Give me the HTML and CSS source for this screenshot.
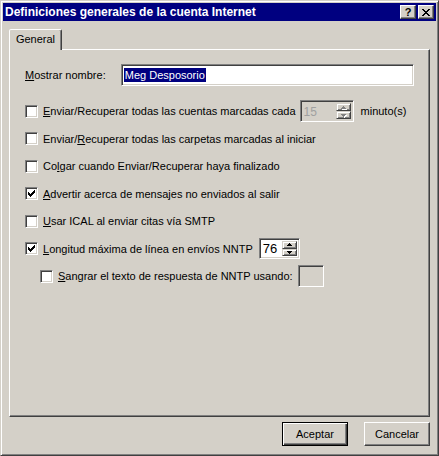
FILE: index.html
```html
<!DOCTYPE html>
<html lang="es">
<head>
    <meta charset="UTF-8">
    <title>Definiciones generales de la cuenta Internet</title>

    <link rel="stylesheet" href="styles.css">
</head>
<body>
    <div class="window">
        <div class="titlebar">
            <span class="caption">Definiciones generales de la cuenta Internet</span>
            <div class="caption-buttons">
                <div class="cap-btn help">?</div>
                <div class="cap-btn">
                    <svg width="8" height="7" viewBox="0 0 8 7" shape-rendering="crispEdges">
                        <path d="M0 0h2v1h-2z M6 0h2v1h-2z M1 1h2v1h-2z M5 1h2v1h-2z M2 2h4v1h-4z M3 3h2v1h-2z M2 4h4v1h-4z M1 5h2v1h-2z M5 5h2v1h-2z M0 6h2v1h-2z M6 6h2v1h-2z" fill="#000"/>
                    </svg>
                </div>
            </div>
        </div>

        <div class="dialog">
            <div class="tabs">
                <div class="tab active">General</div>
            </div>

            <div class="panel">
                <div class="field-row">
                    <div class="field-label"><u>M</u>ostrar nombre:</div>
                    <div class="edit name-edit"><span class="selected">Meg Desposorio</span></div>
                </div>

                <div class="check-list">
                    <div class="check-row">
                        <span class="checkbox"></span>
                        <span class="check-label"><u>E</u>nviar/Recuperar todas las cuentas marcadas cada</span>
                        <div class="spin disabled minutes">
                            <div class="spin-value">15</div>
                            <div class="spin-buttons">
                                <div class="spin-btn"><svg width="5" height="3" viewBox="0 0 5 3" shape-rendering="crispEdges"><path d="M2 0h1v1h-1z M1 1h3v1h-3z M0 2h5v1h-5z"/></svg></div>
                                <div class="spin-btn"><svg width="5" height="3" viewBox="0 0 5 3" shape-rendering="crispEdges"><path d="M0 0h5v1h-5z M1 1h3v1h-3z M2 2h1v1h-1z"/></svg></div>
                            </div>
                        </div>
                        <span class="unit">minuto(s)</span>
                    </div>
                    <div class="check-row">
                        <span class="checkbox"></span>
                        <span class="check-label">Enviar/<u>R</u>ecuperar todas las carpetas marcadas al iniciar</span>
                    </div>
                    <div class="check-row">
                        <span class="checkbox"></span>
                        <span class="check-label">Co<u>l</u>gar cuando Enviar/Recuperar haya finalizado</span>
                    </div>
                    <div class="check-row">
                        <span class="checkbox checked">
                            <svg width="7" height="7" viewBox="0 0 7 7" shape-rendering="crispEdges"><path d="M0 2h1v3h-1z M1 3h1v3h-1z M2 4h1v3h-1z M3 3h1v3h-1z M4 2h1v3h-1z M5 1h1v3h-1z M6 0h1v3h-1z"/></svg>
                        </span>
                        <span class="check-label"><u>A</u>dvertir acerca de mensajes no enviados al salir</span>
                    </div>
                    <div class="check-row">
                        <span class="checkbox"></span>
                        <span class="check-label"><u>U</u>sar ICAL al enviar citas vía SMTP</span>
                    </div>
                    <div class="check-row">
                        <span class="checkbox checked">
                            <svg width="7" height="7" viewBox="0 0 7 7" shape-rendering="crispEdges"><path d="M0 2h1v3h-1z M1 3h1v3h-1z M2 4h1v3h-1z M3 3h1v3h-1z M4 2h1v3h-1z M5 1h1v3h-1z M6 0h1v3h-1z"/></svg>
                        </span>
                        <span class="check-label"><u>L</u>ongitud máxima de línea en envíos NNTP</span>
                        <div class="spin line-length">
                            <div class="spin-value">76</div>
                            <div class="spin-buttons">
                                <div class="spin-btn"><svg width="5" height="3" viewBox="0 0 5 3" shape-rendering="crispEdges"><path d="M2 0h1v1h-1z M1 1h3v1h-3z M0 2h5v1h-5z"/></svg></div>
                                <div class="spin-btn"><svg width="5" height="3" viewBox="0 0 5 3" shape-rendering="crispEdges"><path d="M0 0h5v1h-5z M1 1h3v1h-3z M2 2h1v1h-1z"/></svg></div>
                            </div>
                        </div>
                    </div>
                    <div class="check-row indent">
                        <span class="checkbox"></span>
                        <span class="check-label"><u>S</u>angrar el texto de respuesta de NNTP usando:</span>
                        <div class="edit prefix-edit"></div>
                    </div>
                </div>
            </div>

            <div class="actions">
                <div class="btn default">Aceptar</div>
                <div class="btn">Cancelar</div>
            </div>
        </div>
    </div>
</body>
</html>
```

FILE: styles.css
```css
body {
    margin: 0;
    background: #d4d0c8;
    font-family: "Liberation Sans", Arial, sans-serif;
    font-size: 11px;
    color: #000000;
}

u {
    text-decoration-thickness: 1px;
    text-underline-offset: 1px;
}

.window {
    display: flex;
    flex-direction: column;
    width: 439px;
    height: 456px;
    padding: 2px;
    box-sizing: border-box;
    border: 1px solid;
    border-color: #d4d0c8 #404040 #404040 #d4d0c8;
    box-shadow: inset 1px 1px #ffffff, inset -1px -1px #808080;
    background: #d4d0c8;
}

.titlebar {
    display: flex;
    justify-content: space-between;
    align-items: center;
    height: 18px;
    padding: 0 2px;
    color: #ffffff;
    background: #000080;
}

.caption {
    font-weight: bold;
    font-size: 12px;
}

.caption-buttons {
    display: flex;
    gap: 2px;
}

.cap-btn {
    display: flex;
    justify-content: center;
    align-items: center;
    width: 16px;
    height: 14px;
    box-sizing: border-box;
    border: 1px solid;
    border-color: #ffffff #404040 #404040 #ffffff;
    box-shadow: inset -1px -1px #808080;
    background: #d4d0c8;
    color: #000000;
}

.cap-btn.help {
    font-weight: bold;
    font-size: 11px;
    line-height: 12px;
}

.dialog {
    flex: 1;
    display: flex;
    flex-direction: column;
    padding: 8px 6px 0;
}

.tabs {
    display: flex;
    height: 20px;
}

.tab {
    position: relative;
    z-index: 1;
    width: 53px;
    height: 21px;
    box-sizing: border-box;
    padding-top: 3px;
    border: 1px solid;
    border-bottom: none;
    border-color: #ffffff #404040 transparent #ffffff;
    border-radius: 2px 2px 0 0;
    box-shadow: inset -1px 0 #808080;
    background: #d4d0c8;
    text-align: center;
}

.panel {
    height: 368px;
    padding: 14px 15px 0;
    box-sizing: border-box;
    border: 1px solid;
    border-color: #ffffff #404040 #404040 #ffffff;
    box-shadow: inset -1px -1px #808080;
}

.field-row {
    display: flex;
    align-items: center;
    height: 22px;
}

.field-label {
    width: 96px;
}

.edit {
    box-sizing: border-box;
    border: 1px solid;
    border-color: #808080 #ffffff #ffffff #808080;
    box-shadow: inset 1px 1px #404040, inset -1px -1px #d4d0c8;
}

.name-edit {
    display: flex;
    align-items: center;
    width: 294px;
    height: 22px;
    padding-left: 2px;
    background: #ffffff;
}

.selected {
    padding: 0 1px;
    line-height: 14px;
    color: #ffffff;
    background: #000080;
}

.check-list {
    display: grid;
    grid-auto-rows: 22px;
    row-gap: 5.5px;
    margin-top: 14px;
}

.check-row {
    display: flex;
    align-items: center;
}

.check-row.indent {
    padding-left: 15px;
}

.checkbox {
    display: flex;
    justify-content: center;
    align-items: center;
    width: 13px;
    height: 13px;
    margin-right: 5px;
    box-sizing: border-box;
    border: 1px solid;
    border-color: #808080 #ffffff #ffffff #808080;
    box-shadow: inset 1px 1px #404040, inset -1px -1px #d4d0c8;
    background: #ffffff;
}

.spin {
    display: flex;
    box-sizing: border-box;
    border: 1px solid;
    border-color: #808080 #ffffff #ffffff #808080;
    box-shadow: inset 1px 1px #404040, inset -1px -1px #d4d0c8;
    padding: 2px;
    background: #ffffff;
}

.spin-value {
    flex: 1;
    padding-left: 1px;
}

.spin-buttons {
    display: flex;
    flex-direction: column;
    width: 15px;
}

.spin-btn {
    flex: 1;
    display: flex;
    justify-content: center;
    align-items: center;
    box-sizing: border-box;
    border: 1px solid;
    border-color: #d4d0c8 #404040 #404040 #d4d0c8;
    box-shadow: inset 1px 1px #ffffff, inset -1px -1px #808080;
    background: #d4d0c8;
}

.spin-btn svg {
    fill: #000000;
}

.minutes {
    width: 54px;
    height: 22px;
    margin-left: 4px;
    background: #d4d0c8;
}

.minutes .spin-value {
    line-height: 18px;
    font-size: 12px;
    color: #a0a0a0;
}

.minutes .spin-btn svg {
    fill: #808080;
    filter: drop-shadow(1px 1px 0 #ffffff);
}

.unit {
    margin-left: 7px;
}

.line-length {
    width: 41px;
    height: 21px;
    margin-left: 6px;
}

.line-length .spin-value {
    line-height: 16px;
    font-size: 13px;
}

.prefix-edit {
    width: 26px;
    height: 22px;
    margin-left: 5px;
    background: #d4d0c8;
}

.actions {
    display: flex;
    justify-content: flex-end;
    gap: 16px;
    margin-top: 5px;
}

.btn {
    display: flex;
    justify-content: center;
    align-items: center;
    width: 66px;
    height: 24px;
    box-sizing: border-box;
    border: 1px solid;
    border-color: #ffffff #404040 #404040 #ffffff;
    box-shadow: inset -1px -1px #808080;
    background: #d4d0c8;
}

.btn.default {
    border-color: #000000;
    box-shadow: inset 1px 1px #ffffff, inset -1px -1px #404040, inset -2px -2px #808080;
}
```
